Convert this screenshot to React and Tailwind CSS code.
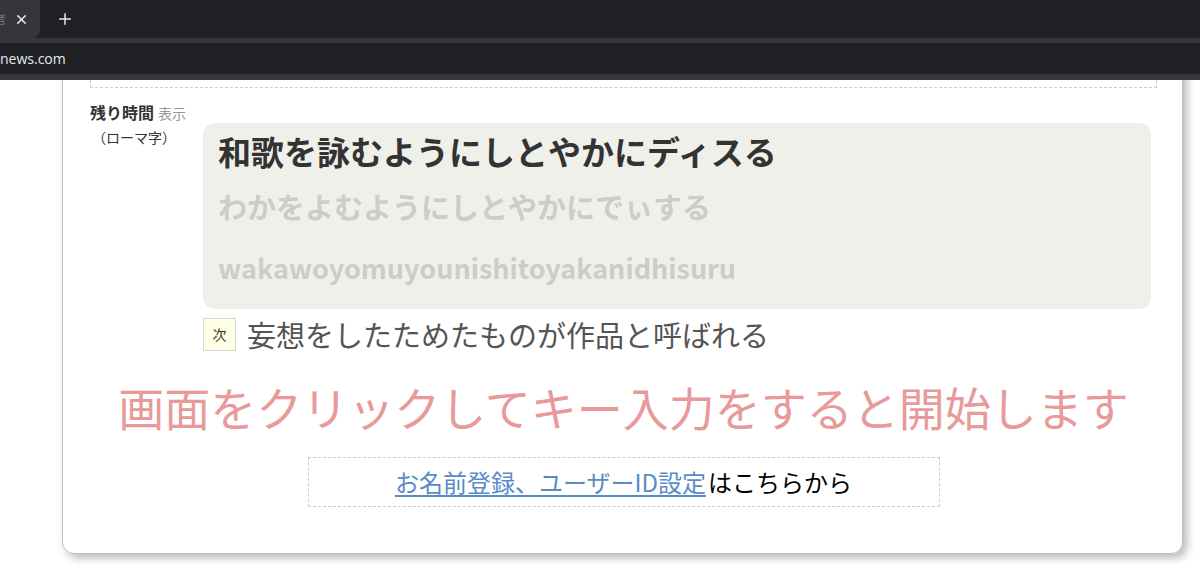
import { X, Plus } from 'lucide-react';

const font = { fontFamily: '"Noto Sans CJK JP", "Noto Sans", sans-serif' };

const BrowserChrome = () => (
    <div className="w-full">
        {/* tab strip */}
        <div className="h-[38px] bg-[#202124] flex items-stretch">
            <div className="w-[40px] bg-[#35363a] rounded-br-[8px] flex items-center relative">
                <span className="absolute left-[-6px] text-[12px] text-[#777]">者</span>
                <X size={15} strokeWidth={2.5} className="text-[#e8eaed] ml-[14px]" />
            </div>
            <div className="flex items-center ml-[16px]">
                <Plus size={18} strokeWidth={2} className="text-[#e8eaed]" />
            </div>
        </div>
        {/* toolbar */}
        <div className="h-[42px] bg-[#35363a] pt-[5px] pb-[6px]">
            <div className="h-full bg-[#202124] flex items-center">
                <span className="text-[14px] text-[#e8eaed]" style={{ fontFamily: '"Open Sans", "Noto Sans", sans-serif' }}>news.com</span>
            </div>
        </div>
    </div>
);

export default function App() {
    return (
        <div className="w-[1200px] h-[570px] overflow-hidden bg-white" style={font}>
            <BrowserChrome />

            <div className="h-[490px] overflow-hidden bg-white">
                <div className="-mt-[40px] ml-[62px] w-[1121px] border border-[#c0c0c0] rounded-[12px] shadow-[4px_4px_8px_rgba(0,0,0,0.28)] pl-[27px] pr-[25px] pb-[46px]">
                    {/* previous section */}
                    <div className="h-[47px] border border-dashed border-[#cccccc] border-t-0"></div>

                    {/* label */}
                    <div className="mt-[14px] leading-[20px] flex items-baseline gap-[4px]">
                        <span className="text-[16px] font-bold text-[#333]">残り時間</span>
                        <span className="text-[14px] text-[#999]">表示</span>
                    </div>

                    {/* typing area */}
                    <div className="flex">
                        <div className="w-[113px] shrink-0 pl-[2px] pt-[4px] text-[14px] leading-[20px] text-[#333]">（ローマ字）</div>
                        <div className="flex-1 mr-[6px] rounded-[12px] bg-[#f0f0eb] pl-[15px] pt-[6px] pb-[12px]">
                            <div className="text-[33px] font-bold text-[#333] leading-[44px]">和歌を詠むようにしとやかにディスる</div>
                            <div className="text-[29px] font-bold text-[#cccccc] leading-[66px]">わかをよむようにしとやかにでぃする</div>
                            <div className="text-[27px] font-bold text-[#cccccc] leading-[58px]">wakawoyomuyounishitoyakanidhisuru</div>
                        </div>
                    </div>

                    {/* next */}
                    <div className="ml-[113px] mt-[9px] flex items-center gap-[11px]">
                        <div className="w-[33px] h-[33px] border border-[#d8d8d8] bg-[#ffffe4] flex items-center justify-center text-[14px] text-[#333]">次</div>
                        <div className="text-[29px] leading-[33px] text-[#555]">妄想をしたためたものが作品と呼ばれる</div>
                    </div>

                    {/* start message */}
                    <div className="mt-[25px] text-center text-[46px] leading-[60px] text-[#e89a9b]">画面をクリックしてキー入力をすると開始します</div>

                    {/* register link */}
                    <div className="mt-[21px] mx-auto w-[632px] h-[50px] border border-dashed border-[#cccccc] flex items-center justify-center text-[24px] leading-[30px]">
                        <a href="#" className="text-[#5a8bc8] underline underline-offset-[3px]">お名前登録、ユーザーID設定</a>
                        <span className="text-black ml-[2px]">はこちらから</span>
                    </div>
                </div>
            </div>
        </div>
    );
}
